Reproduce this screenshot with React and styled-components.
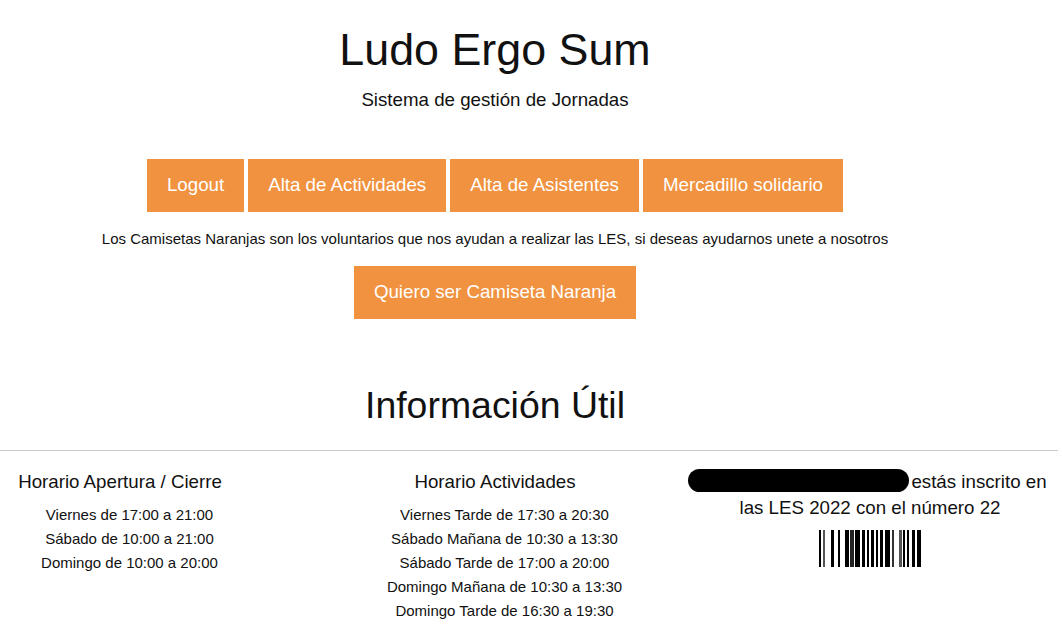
import styled, { createGlobalStyle } from "styled-components";

const GlobalStyle = createGlobalStyle`
	body {
		margin: 0;
		background: #fff;
		color: #111;
		font-family: "Liberation Sans", Arial, sans-serif;
	}
`;

// x, ancho, color of every bar
const BARS = [
	[0, 2, "#000"], [4, 2, "#555"], [12, 3, "#000"], [19, 2, "#000"], [26, 4, "#000"],
	[31, 4, "#222"], [36, 5, "#000"], [43, 3, "#000"], [48, 2, "#000"], [52, 3, "#000"],
	[57, 2, "#000"], [61, 3, "#000"], [66, 5, "#000"], [73, 2, "#333"], [80, 3, "#555"],
	[84, 2, "#000"], [88, 2, "#000"], [93, 3, "#000"], [98, 4, "#000"],
];

const Barcode = () => (
	<BarcodeSC viewBox="0 0 102 37" width="102" height="37">
		{BARS.map(([x, w, color]) => (
			<rect key={x} x={x} y="0" width={w} height="37" fill={color} />
		))}
	</BarcodeSC>
);

const App = () => {
	return (
		<PageSC>
			<GlobalStyle />
			<HeaderSC>
				<h1>Ludo Ergo Sum</h1>
				<p>Sistema de gestión de Jornadas</p>
			</HeaderSC>
			<NavSC>
				<ButtonSC>Logout</ButtonSC>
				<ButtonSC>Alta de Actividades</ButtonSC>
				<ButtonSC>Alta de Asistentes</ButtonSC>
				<ButtonSC>Mercadillo solidario</ButtonSC>
			</NavSC>
			<NoteSC>
				Los Camisetas Naranjas son los voluntarios que nos ayudan a realizar las LES, si deseas ayudarnos unete a nosotros
			</NoteSC>
			<CtaSC>
				<ButtonSC>Quiero ser Camiseta Naranja</ButtonSC>
			</CtaSC>
			<SectionTitleSC>Información Útil</SectionTitleSC>
			<ColumnsSC>
				<ColumnSC>
					<h3>Horario Apertura / Cierre</h3>
					<ul>
						<li>Viernes de 17:00 a 21:00</li>
						<li>Sábado de 10:00 a 21:00</li>
						<li>Domingo de 10:00 a 20:00</li>
					</ul>
				</ColumnSC>
				<ColumnSC>
					<h3>Horario Actividades</h3>
					<ul>
						<li>Viernes Tarde de 17:30 a 20:30</li>
						<li>Sábado Mañana de 10:30 a 13:30</li>
						<li>Sábado Tarde de 17:00 a 20:00</li>
						<li>Domingo Mañana de 10:30 a 13:30</li>
						<li>Domingo Tarde de 16:30 a 19:30</li>
					</ul>
				</ColumnSC>
				<BadgeSC>
					<div>
						<RedactedSC />estás inscrito en las LES 2022 con el número 22
					</div>
					<Barcode />
				</BadgeSC>
			</ColumnsSC>
		</PageSC>
	);
};

const PageSC = styled.div`
	width: 1058px;
	height: 636px;
	overflow: hidden;
`;
const HeaderSC = styled.header`
	width: 990px;
	padding-top: 24px;
	text-align: center;
	h1 {
		margin: 0;
		font-size: 44.8px;
		line-height: 50px;
		font-weight: 400;
	}
	p {
		margin: 16px 0 0;
		font-size: 18.72px;
		line-height: 20px;
	}
`;
const NavSC = styled.nav`
	width: 990px;
	margin-top: 49px;
	display: flex;
	justify-content: center;
	gap: 4px;
`;
const ButtonSC = styled.a`
	display: block;
	padding: 0 20px;
	height: 53px;
	line-height: 51px;
	background: #f19240;
	color: #fff;
	font-size: 18.72px;
`;
const NoteSC = styled.p`
	width: 990px;
	margin: 18px 0 0;
	text-align: center;
	font-size: 15px;
	line-height: 18px;
`;
const CtaSC = styled.div`
	width: 990px;
	margin-top: 18px;
	display: flex;
	justify-content: center;
`;
const SectionTitleSC = styled.h2`
	width: 990px;
	margin: 62px 0 0;
	text-align: center;
	font-size: 37.44px;
	line-height: 48px;
	font-weight: 400;
`;
const ColumnsSC = styled.section`
	margin-top: 21px;
	border-top: 1px solid #ccc;
	padding-top: 18px;
	display: grid;
	grid-template-columns: 240px 510px 1fr;
`;
const ColumnSC = styled.div`
	text-align: center;
	h3 {
		margin: 0 0 8px;
		font-size: 18.72px;
		line-height: 26px;
		font-weight: 400;
	}
	ul {
		margin: 0;
		padding: 0 0 0 19px;
		list-style: none;
		font-size: 15px;
		line-height: 24px;
	}
`;
const BadgeSC = styled.div`
	margin-left: -68px;
	text-align: center;
	font-size: 18.72px;
	line-height: 26px;
`;
const RedactedSC = styled.span`
	display: inline-block;
	width: 221px;
	height: 23px;
	margin: 0 2px 0 -5px;
	vertical-align: -4px;
	border-radius: 12px;
	background: #000;
`;
const BarcodeSC = styled.svg`
	display: block;
	margin: 9px auto 0;
`;

export default App;
